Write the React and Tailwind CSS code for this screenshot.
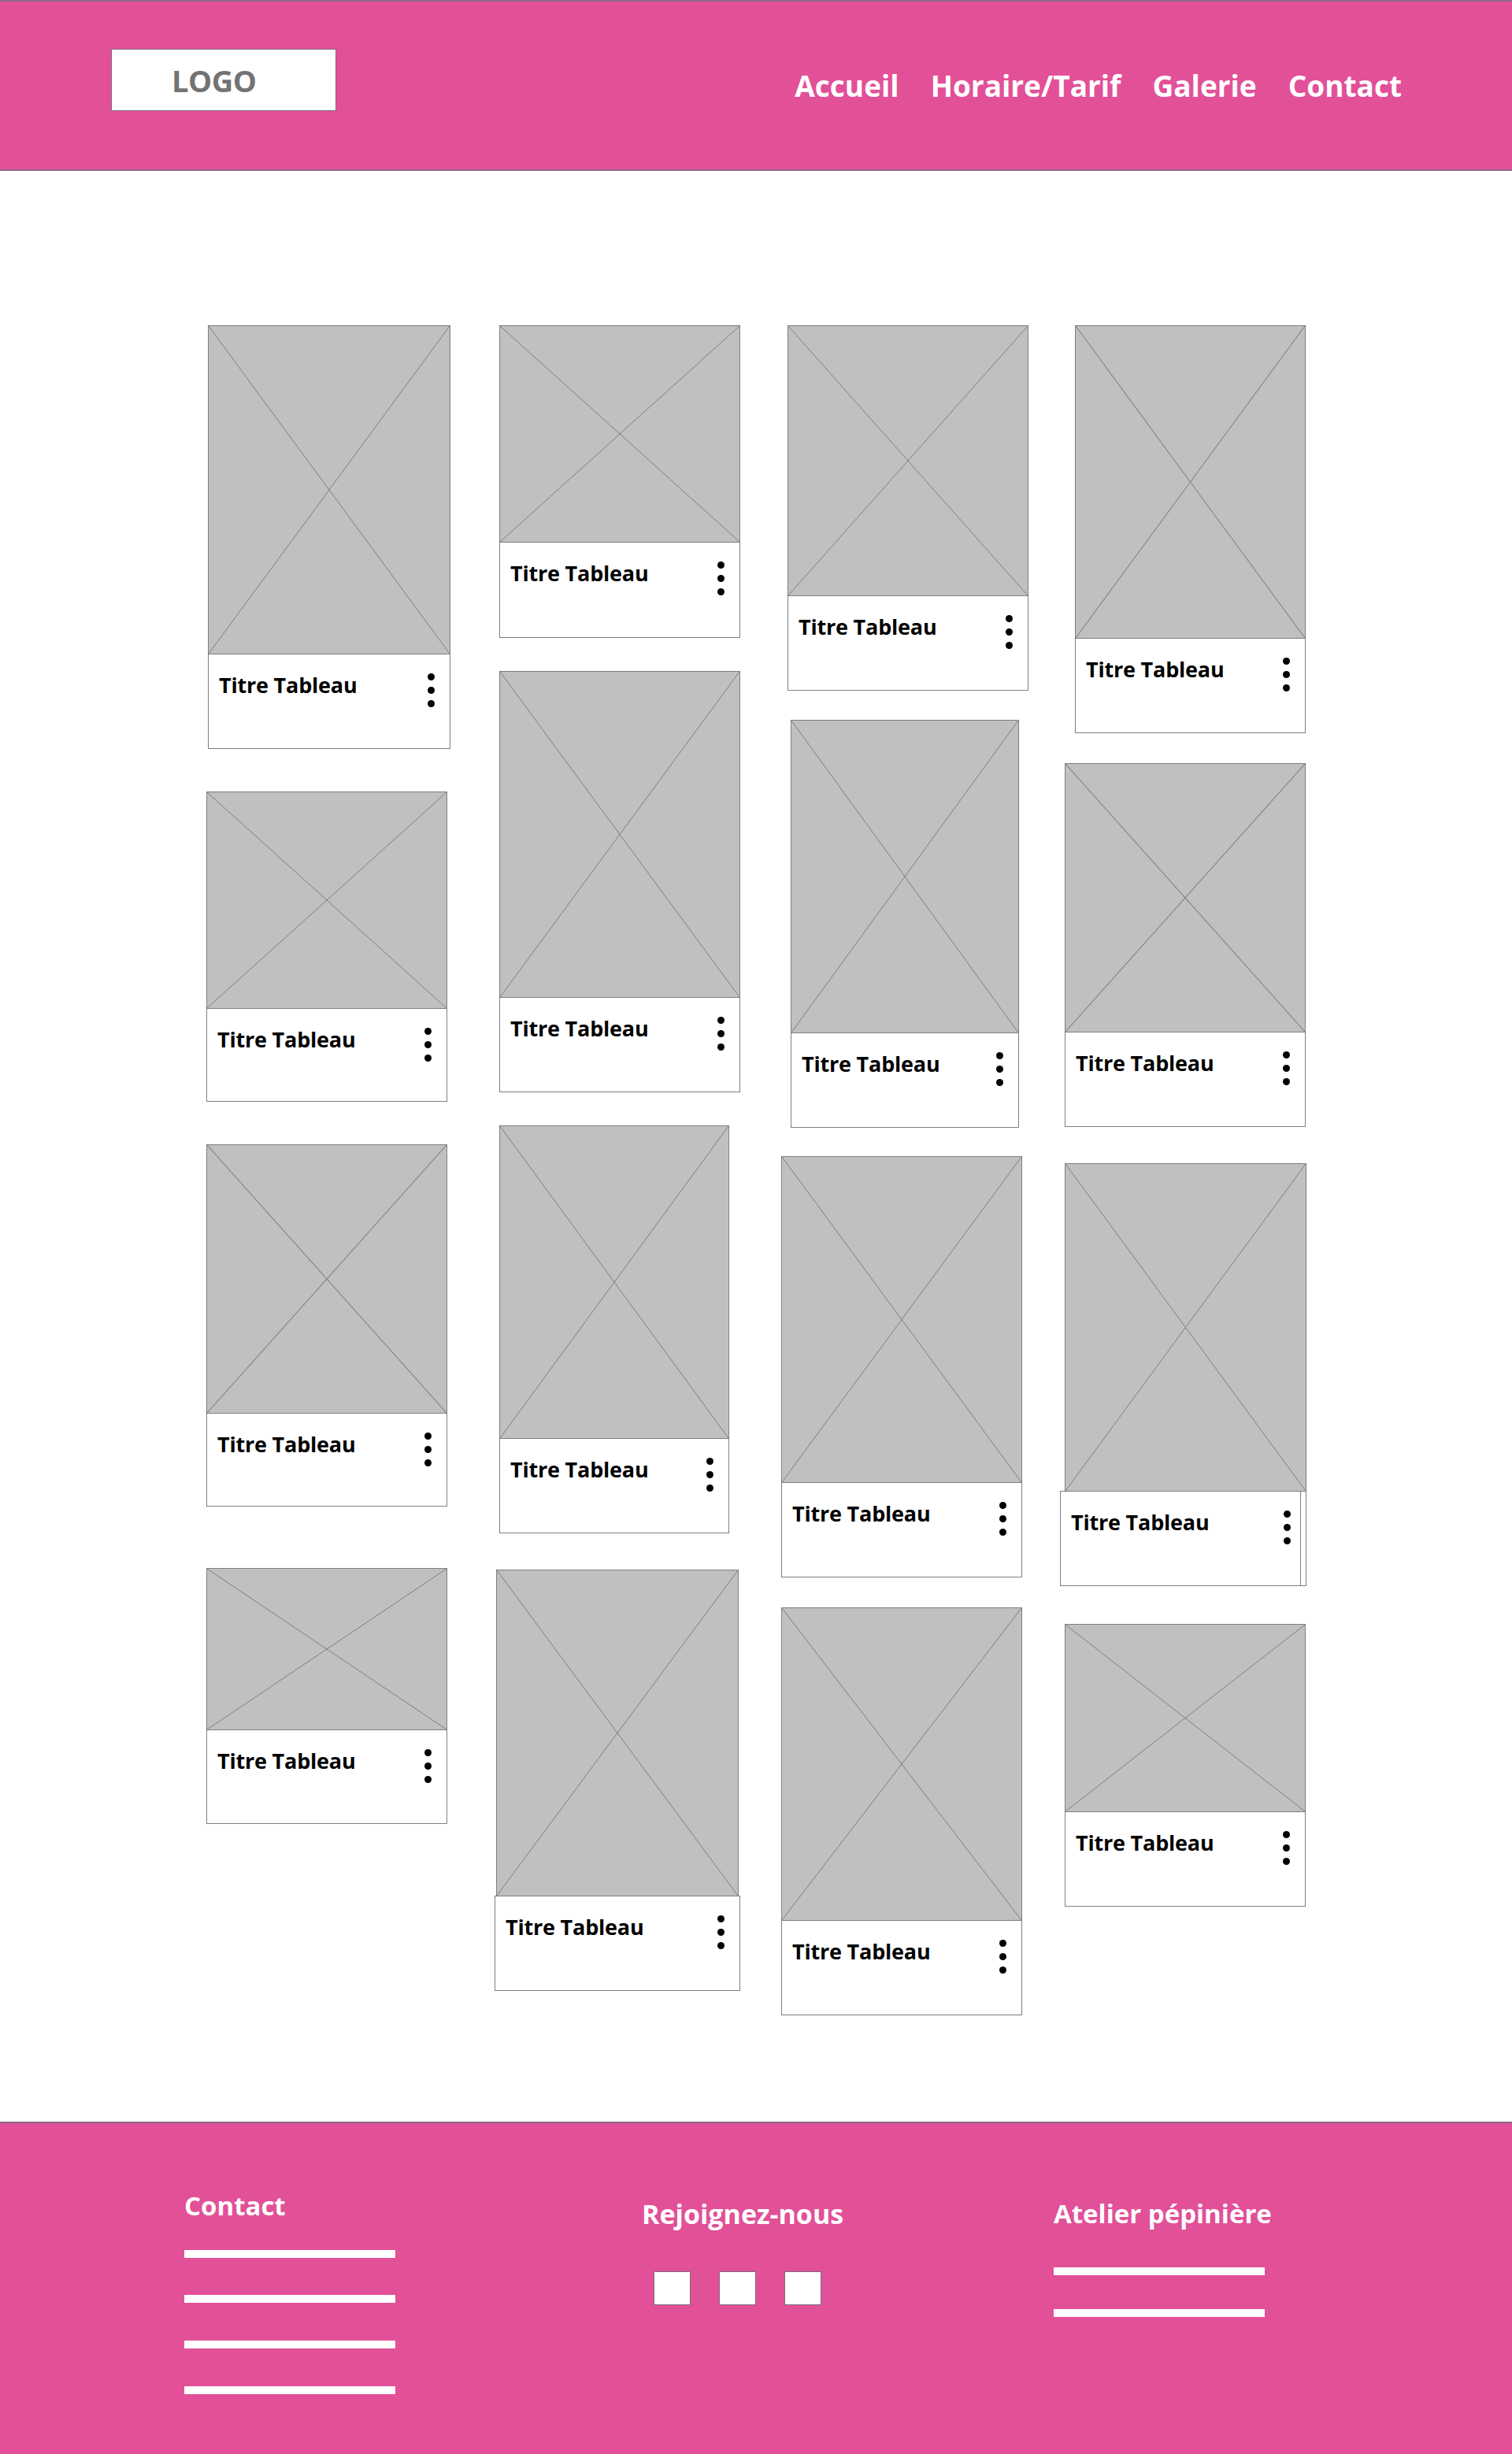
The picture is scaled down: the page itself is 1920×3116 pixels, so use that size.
const columns = [
  {
    cls: 'w-[366px]',
    cards: [
      { box: 'ml-[2px] w-[308px]', img: 'h-[418px]' },
      { box: 'mt-[54px] w-[306px]', img: 'h-[276px]', cap: 'h-[119px]' },
      { box: 'mt-[54px] w-[306px]', img: 'h-[342px]', cap: 'h-[119px]' },
      { box: 'mt-[78px] w-[306px]', img: 'h-[206px]', cap: 'h-[120px]' },
    ],
  },
  {
    cls: 'w-[364px]',
    cards: [
      { box: 'ml-[6px] w-[306px]', img: 'h-[276px]', cap: 'h-[122px]' },
      { box: 'mt-[42px] ml-[6px] w-[306px]', img: 'h-[415px]' },
      { box: 'mt-[42px] ml-[6px] w-[292px]', img: 'h-[398px]' },
      { box: 'mt-[46px] w-[312px]', img: 'h-[415px]', imgBox: 'mx-[2px]' },
    ],
  },
  {
    cls: 'w-[353px]',
    cards: [
      { box: 'ml-[8px] w-[306px]', img: 'h-[344px]', cap: 'h-[121px]' },
      { box: 'mt-[37px] ml-[12px] w-[290px]', img: 'h-[398px]' },
      { box: 'mt-[36px] w-[306px]', img: 'h-[415px]' },
      { box: 'mt-[38px] w-[306px]', img: 'h-[398px]' },
    ],
  },
  {
    cls: 'w-[330px]',
    cards: [
      { box: 'ml-[20px] w-[293px]', img: 'h-[398px]' },
      { box: 'mt-[38px] ml-[7px] w-[306px]', img: 'h-[342px]' },
      { box: 'mt-[46px] ml-[1px] w-[313px]', img: 'h-[417px]', imgBox: 'ml-[6px]', extraLine: true },
      { box: 'mt-[48px] ml-[7px] w-[306px]', img: 'h-[239px]' },
    ],
  },
];

const Placeholder = ({ img, imgBox = '' }) => (
  <div className={`relative border border-[#7f7f7f] bg-[#c1bfc0] ${img} ${imgBox}`}>
    <svg className="absolute inset-0 w-full h-full" viewBox="0 0 100 100" preserveAspectRatio="none">
      <line x1="0" y1="0" x2="100" y2="100" stroke="#7f7f7f" strokeWidth="1" vectorEffect="non-scaling-stroke" />
      <line x1="100" y1="0" x2="0" y2="100" stroke="#7f7f7f" strokeWidth="1" vectorEffect="non-scaling-stroke" />
    </svg>
  </div>
);

const Card = ({ box, img, cap = 'h-[121px]', imgBox, extraLine }) => (
  <div className={box}>
    <Placeholder img={img} imgBox={imgBox} />
    <div className={`relative -mt-px flex justify-between border border-[#7f7f7f] bg-white ${cap}`}>
      <span className="pl-[13px] pt-[25px] text-[27px] leading-none font-bold tracking-[-0.2px] text-black">Titre Tableau</span>
      <div className="flex flex-col gap-[8px] pt-[24px] pr-[19px]">
        <span className="w-[9px] h-[9px] rounded-full bg-black" />
        <span className="w-[9px] h-[9px] rounded-full bg-black" />
        <span className="w-[9px] h-[9px] rounded-full bg-black" />
      </div>
      {extraLine && <span className="absolute top-0 bottom-0 right-[6px] w-px bg-[#7f7f7f]" />}
    </div>
  </div>
);

const navLinks = ['Accueil', 'Horaire/Tarif', 'Galerie', 'Contact'];

const FooterLine = ({ cls }) => <div className={`w-[268px] h-[10px] bg-white ${cls}`} />;

export default function App() {
  return (
    <div className="w-[1920px] font-['Open_Sans',sans-serif]">
      {/* Header */}
      <header className="flex justify-between h-[217px] bg-[#e25098] border-y-2 border-[#8c6a84]">
        <div className="ml-[141px] mt-[60px] w-[286px] h-[79px] border border-[#7b6b7b] bg-white pl-[76px] pt-[20px]">
          <span className="text-[38px] leading-none font-bold tracking-[-0.5px] text-[#737373]">LOGO</span>
        </div>
        <nav className="flex gap-[40px] pt-[88px] pr-[140px]">
          {navLinks.map((l) => (
            <a key={l} href="#" className="text-[37px] leading-none font-bold text-white">
              {l}
            </a>
          ))}
        </nav>
      </header>

      {/* Galerie */}
      <main className="flex h-[2477px] pl-[262px] pt-[196px] bg-white">
        {columns.map((col, i) => (
          <div key={i} className={`flex flex-col ${col.cls}`}>
            {col.cards.map((c, j) => (
              <Card key={j} {...c} />
            ))}
          </div>
        ))}
      </main>

      {/* Footer */}
      <footer className="flex h-[422px] bg-[#e25098] border-t-2 border-[#8c6a84] pl-[234px] text-white">
        <div className="w-[581px] pt-[88px]">
          <h3 className="text-[33px] leading-none font-bold">Contact</h3>
          <FooterLine cls="mt-[40px]" />
          <FooterLine cls="mt-[47px]" />
          <FooterLine cls="mt-[48px]" />
          <FooterLine cls="mt-[48px]" />
        </div>
        <div className="w-[523px] pt-[98px]">
          <h3 className="text-[34px] leading-none font-bold">Rejoignez-nous</h3>
          <div className="flex gap-[36px] mt-[56px] ml-[15px]">
            <span className="w-[47px] h-[43px] bg-white border border-[#7b6b7b]" />
            <span className="w-[47px] h-[43px] bg-white border border-[#7b6b7b]" />
            <span className="w-[47px] h-[43px] bg-white border border-[#7b6b7b]" />
          </div>
        </div>
        <div className="pt-[98px]">
          <h3 className="text-[33px] leading-none font-bold">Atelier pépinière</h3>
          <FooterLine cls="mt-[52px]" />
          <FooterLine cls="mt-[43px]" />
        </div>
      </footer>
    </div>
  );
}
